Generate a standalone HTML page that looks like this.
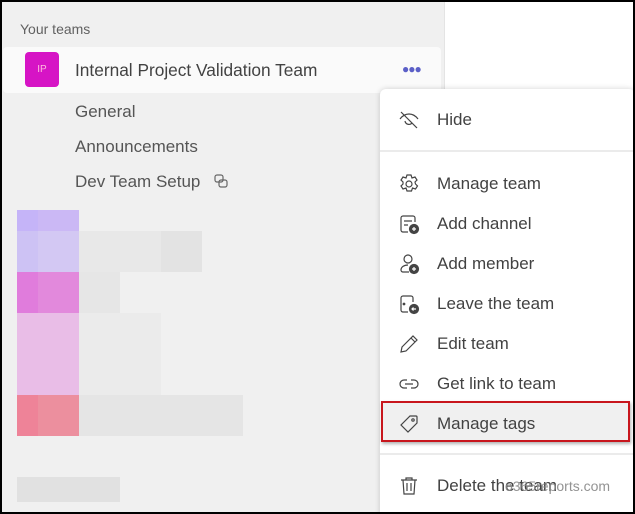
<!DOCTYPE html>
<html><head><style>
*{margin:0;padding:0;box-sizing:border-box}
body{width:635px;height:514px;overflow:hidden;background:#000;font-family:"Liberation Sans",sans-serif;position:relative}
.frame{position:absolute;left:2px;top:2px;width:631px;height:510px;background:#fff;overflow:hidden}
.side{position:absolute;left:0;top:0;width:443px;height:510px;background:#f0f0f0;border-right:1px solid #e4e4e4}
.t{position:absolute;color:#424242}
.px{position:absolute}
.menu{position:absolute;left:378px;top:87px;width:255px;height:430px;background:#fff;border-radius:6px;box-shadow:0 0 6px rgba(0,0,0,.18)}
.it{position:absolute;left:0;width:255px;height:40px}
.it span{position:absolute;left:57px;top:10px;font-size:17px;color:#424242}
.it svg{position:absolute;left:18px;top:9px;width:22px;height:22px}
.sep{position:absolute;left:0;width:255px;height:2px;background:#ebebeb}
</style></head><body>
<div class="frame">
<div class="side">
 <div class="t" style="left:18px;top:19px;font-size:14px;color:#616161">Your teams</div>
 <div style="position:absolute;left:1px;top:45px;width:438px;height:46px;background:#fafafa;border-radius:4px"></div>
 <div style="position:absolute;left:23px;top:50px;width:34px;height:35px;background:#d614c5;border-radius:4px;color:#fbd;font-size:10px;line-height:35px;text-align:center">IP</div>
 <div class="t" style="left:73px;top:58px;font-size:17.3px">Internal Project Validation Team</div>
 <div style="position:absolute;left:400px;top:60px;color:#5b5fc7;font-size:12px;letter-spacing:-1px;font-weight:bold">●●●</div>
 <div class="t" style="left:73px;top:100px;font-size:17px;color:#555">General</div>
 <div class="t" style="left:73px;top:135px;font-size:17px;color:#555">Announcements</div>
 <div class="t" style="left:73px;top:170px;font-size:17px;color:#555">Dev Team Setup</div>
 <svg style="position:absolute;left:212px;top:172px" width="14" height="14" viewBox="0 0 14 14" fill="none" stroke="#666" stroke-width="1.2"><rect x="1" y="1" width="8" height="7" rx="2"/><rect x="5" y="6" width="8" height="7" rx="2"/></svg>
 <div class="px" style="left:15px;top:208px;width:21px;height:21px;background:#c5b4f8"></div>
 <div class="px" style="left:36px;top:208px;width:41px;height:21px;background:#cbb8f5"></div>
 <div class="px" style="left:15px;top:229px;width:21px;height:41px;background:#cdc2f4"></div>
 <div class="px" style="left:36px;top:229px;width:41px;height:41px;background:#d3c8f3"></div>
 <div class="px" style="left:77px;top:229px;width:82px;height:41px;background:#e8e8e8"></div>
 <div class="px" style="left:159px;top:229px;width:41px;height:41px;background:#e3e3e3"></div>
 <div class="px" style="left:15px;top:270px;width:21px;height:41px;background:#e07cdc"></div>
 <div class="px" style="left:36px;top:270px;width:41px;height:41px;background:#e289dc"></div>
 <div class="px" style="left:77px;top:270px;width:41px;height:41px;background:#e6e6e6"></div>
 <div class="px" style="left:15px;top:311px;width:62px;height:82px;background:#e9bde7"></div>
 <div class="px" style="left:77px;top:311px;width:82px;height:82px;background:#ebebeb"></div>
 <div class="px" style="left:15px;top:393px;width:21px;height:41px;background:#ee8398"></div>
 <div class="px" style="left:36px;top:393px;width:41px;height:41px;background:#ec8f9e"></div>
 <div class="px" style="left:77px;top:393px;width:164px;height:41px;background:#e5e5e5"></div>
 <div class="px" style="left:15px;top:475px;width:103px;height:25px;background:#e1e1e1"></div>
</div>
<div class="menu">
 <div class="it" style="top:11px"><svg viewBox="0 0 22 22" fill="none" stroke="#444" stroke-width="1.2"><path d="M2 10c3-4 6-5 9-5s6 1 9 5M7 12a4 4 0 0 0 7 2"/><path d="M3 3l16 16"/></svg><span>Hide</span></div>
 <div class="sep" style="top:61px"></div>
 <div class="it" style="top:75px"><svg viewBox="0 0 22 22" fill="none" stroke="#444" stroke-width="1.2"><circle cx="11" cy="11" r="3"/><path d="M9 2h4l1 3 3-1 2 3-2 2 .5 2 2 2-2 3-3-1-1 3H9l-1-3-3 1-2-3 2-2V9L3 7l2-3 3 1z"/></svg><span>Manage team</span></div>
 <div class="it" style="top:115px"><svg viewBox="0 0 22 22" fill="none" stroke="#444" stroke-width="1.2"><path d="M10 19H5a2 2 0 0 1-2-2V5a2 2 0 0 1 2-2h10a2 2 0 0 1 2 2v4M6 8h8M6 12h4"/><circle cx="16" cy="16" r="4.5" fill="#444"/><path d="M16 14v4M14 16h4" stroke="#fff"/></svg><span>Add channel</span></div>
 <div class="it" style="top:155px"><svg viewBox="0 0 22 22" fill="none" stroke="#444" stroke-width="1.2"><circle cx="10" cy="6" r="4"/><path d="M11 19H5a2 2 0 0 1-2-2c0-3 3-5 7-5"/><circle cx="16" cy="16" r="4.5" fill="#444"/><path d="M16 14v4M14 16h4" stroke="#fff"/></svg><span>Add member</span></div>
 <div class="it" style="top:195px"><svg viewBox="0 0 22 22" fill="none" stroke="#444" stroke-width="1.2"><path d="M10 19H5a2 2 0 0 1-2-2V5a2 2 0 0 1 2-2h8a2 2 0 0 1 2 2v4"/><circle cx="6" cy="11" r=".8" fill="#444"/><circle cx="16" cy="16" r="4.5" fill="#444"/><path d="M18 16h-4M15.5 14.5L14 16l1.5 1.5" stroke="#fff"/></svg><span>Leave the team</span></div>
 <div class="it" style="top:235px"><svg viewBox="0 0 22 22" fill="none" stroke="#444" stroke-width="1.2"><path d="M3 19l1-5L15 3l4 4L8 18zM13 5l4 4"/></svg><span>Edit team</span></div>
 <div class="it" style="top:275px"><svg viewBox="0 0 22 22" fill="none" stroke="#444" stroke-width="1.2"><path d="M9 7H6a4 4 0 0 0 0 8h3M13 7h3a4 4 0 0 1 0 8h-3M7 11h8"/></svg><span>Get link to team</span></div>
 <div style="position:absolute;left:1px;top:312px;width:249px;height:41px;background:#f0f0f0;border:2px solid #c8161d;box-shadow:1px 2px 3px rgba(0,0,0,.3)"></div>
 <div class="it" style="top:315px"><svg viewBox="0 0 22 22" fill="none" stroke="#444" stroke-width="1.2"><path d="M12 3h6a1 1 0 0 1 1 1v6L10 19 3 12z"/><circle cx="15" cy="7" r="1.2"/></svg><span>Manage tags</span></div>
 <div class="sep" style="top:364px"></div>
 <div class="it" style="top:377px"><svg viewBox="0 0 22 22" fill="none" stroke="#444" stroke-width="1.2"><path d="M3 5h16M8 5V3h6v2M5 5l1 14h10l1-14M9 8v8M13 8v8"/></svg><span>Delete the team</span></div>
</div>
<div style="position:absolute;left:503px;top:476px;font-size:14px;color:#888;opacity:.9">o365reports.com</div>
</div>
</body></html>
